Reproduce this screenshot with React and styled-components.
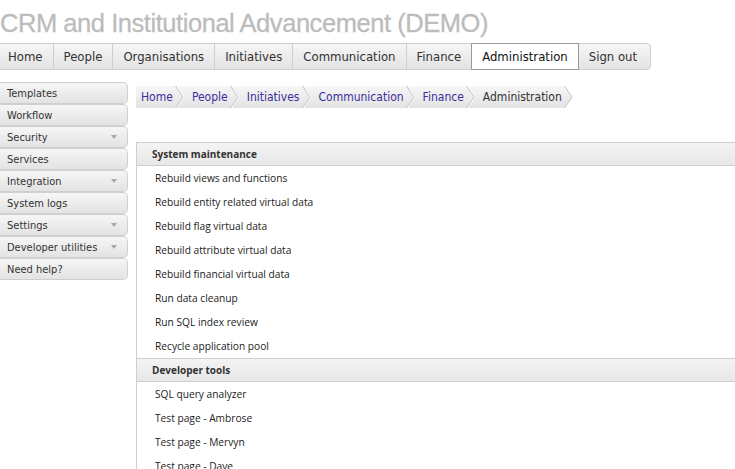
import React, { useId } from "react";
import styled, { createGlobalStyle } from "styled-components";

const GlobalStyle = createGlobalStyle`
  html, body {
    margin: 0;
    padding: 0;
    background: #fff;
  }
  body {
    font-family: "DejaVu Sans Condensed", "DejaVu Sans", Verdana, sans-serif;
    overflow: hidden;
  }
  a {
    text-decoration: none;
  }
`;

const tahoma = `"DejaVu Sans Condensed", "DejaVu Sans", Tahoma, sans-serif`;
const segoe = `"Open Sans", "Noto Sans", "Segoe UI", sans-serif`;
const greyBar = `linear-gradient(#f6f6f6, #e3e3e3)`;

const Page = styled.div`
  width: 735px;
  height: 469px;
  overflow: hidden;
`;

const Title = styled.h1`
  margin: 0;
  height: 43px;
  padding-top: 8px;
  box-sizing: border-box;
  font-family: "Liberation Sans", Arial, sans-serif;
  font-weight: 400;
  font-size: 25.5px;
  line-height: 30px;
  letter-spacing: -0.45px;
  color: #bcbcbc;
  -webkit-text-stroke: 0.3px #bcbcbc;
  white-space: nowrap;
`;

const Nav = styled.nav`
  display: flex;
  height: 27px;
`;

const Tab = styled.a`
  display: flex;
  align-items: center;
  box-sizing: border-box;
  height: 27px;
  padding: 0 ${({ $last }) => ($last ? 13 : 10)}px;
  padding-left: ${({ $first }) => ($first ? 8 : 10)}px;
  font-family: ${tahoma};
  font-size: 13px;
  color: ${({ $active }) => ($active ? "#111" : "#333")};
  background: ${({ $active }) => ($active ? "#fff" : greyBar)};
  border: 1px solid ${({ $active }) => ($active ? "#9a9a9a" : "#cfcfcf")};
  border-left: 1px solid ${({ $active, $first }) => ($active ? "#9a9a9a" : $first ? "transparent" : "#cfcfcf")};
  margin-left: -1px;
  position: relative;
  z-index: ${({ $active }) => ($active ? 1 : 0)};
  border-radius: ${({ $last }) => ($last ? "0 4px 4px 0" : "0")};
  white-space: nowrap;
`;

const Main = styled.div`
  display: flex;
  gap: 8px;
  margin-top: 12px;
  align-items: flex-start;
`;

const Side = styled.ul`
  list-style: none;
  margin: 0;
  padding: 0;
  width: 128px;
  flex: none;
`;

const SideItem = styled.li`
  display: flex;
  align-items: center;
  box-sizing: border-box;
  height: 22px;
  padding: 0 10px 0 7px;
  border: 1px solid #cfcfcf;
  border-left: none;
  border-radius: 0 5px 5px 0;
  background: ${greyBar};
  font-family: ${tahoma};
  font-size: 11px;
  color: #333;
  white-space: nowrap;
`;

const DropArrow = styled.span`
  margin-left: auto;
  width: 0;
  height: 0;
  border-left: 3.5px solid transparent;
  border-right: 3.5px solid transparent;
  border-top: 4px solid #a8a8a8;
`;

const Content = styled.div`
  flex: 1;
  min-width: 0;
  padding-top: 4px;
`;

const Crumbs = styled.div`
  display: flex;
  height: 22px;
`;

const CrumbText = styled.a`
  display: flex;
  align-items: center;
  height: 22px;
  padding: 0 2px 0 ${({ $first }) => ($first ? 5 : 7)}px;
  background: ${greyBar};
  font-family: ${tahoma};
  font-size: 12px;
  color: ${({ $current }) => ($current ? "#333" : "#3b2f9e")};
  white-space: nowrap;
`;

const ChevronSvg = styled.svg`
  display: block;
  flex: none;
`;

function Chevron({ last }) {
  const id = useId().replace(/:/g, "");
  return (
    <ChevronSvg width="10" height="22" viewBox="0 0 10 22">
      <defs>
        <linearGradient id={id} x1="0" y1="0" x2="0" y2="1">
          <stop offset="0" stopColor="#f6f6f6" />
          <stop offset="1" stopColor="#e3e3e3" />
        </linearGradient>
      </defs>
      {!last && <rect x="0" y="0" width="10" height="22" fill={`url(#${id})`} />}
      <polygon points="0,0 8.5,11 0,22" fill={`url(#${id})`} />
      <polyline points="1.5,0 9,11 1.5,22" fill="none" stroke="#fff" strokeWidth="1" />
      <polyline points="0.5,0 8,11 0.5,22" fill="none" stroke="#c4c4c4" strokeWidth="1" />
    </ChevronSvg>
  );
}

const Panel = styled.div`
  margin-top: 34px;
  border-left: 1px solid #cfcfcf;
  min-height: 340px;
`;

const SectionHead = styled.div`
  box-sizing: border-box;
  height: 24px;
  display: flex;
  align-items: center;
  padding-left: 15px;
  border-top: 1px solid #cfcfcf;
  border-bottom: 1px solid #cfcfcf;
  background: linear-gradient(#f4f4f4, #e8e8e8);
  font-family: ${segoe};
  font-weight: 700;
  font-size: 10px;
  color: #333;
`;

const LinkList = styled.ul`
  list-style: none;
  margin: 0;
  padding: 0;
`;

const LinkItem = styled.li`
  height: 24px;
  line-height: 24px;
  padding-left: 18px;
  font-family: ${segoe};
  font-size: 10.2px;
  color: #222;
  white-space: nowrap;
`;

const tabs = ["Home", "People", "Organisations", "Initiatives", "Communication", "Finance", "Administration", "Sign out"];

const sideItems = [
  { label: "Templates" },
  { label: "Workflow" },
  { label: "Security", menu: true },
  { label: "Services" },
  { label: "Integration", menu: true },
  { label: "System logs" },
  { label: "Settings", menu: true },
  { label: "Developer utilities", menu: true },
  { label: "Need help?" },
];

const crumbs = ["Home", "People", "Initiatives", "Communication", "Finance", "Administration"];

const sections = [
  {
    title: "System maintenance",
    links: [
      "Rebuild views and functions",
      "Rebuild entity related virtual data",
      "Rebuild flag virtual data",
      "Rebuild attribute virtual data",
      "Rebuild financial virtual data",
      "Run data cleanup",
      "Run SQL index review",
      "Recycle application pool",
    ],
  },
  {
    title: "Developer tools",
    links: ["SQL query analyzer", "Test page - Ambrose", "Test page - Mervyn", "Test page - Dave"],
  },
];

export default function App() {
  return (
    <Page>
      <GlobalStyle />
      <Title>CRM and Institutional Advancement (DEMO)</Title>
      <Nav>
        {tabs.map((t, i) => (
          <Tab
            key={t}
            href="#"
            $first={i === 0}
            $last={i === tabs.length - 1}
            $active={t === "Administration"}
          >
            {t}
          </Tab>
        ))}
      </Nav>
      <Main>
        <Side>
          {sideItems.map((s) => (
            <SideItem key={s.label}>
              {s.label}
              {s.menu && <DropArrow />}
            </SideItem>
          ))}
        </Side>
        <Content>
          <Crumbs>
            {crumbs.map((c, i) => (
              <React.Fragment key={c}>
                <CrumbText href="#" $first={i === 0} $current={i === crumbs.length - 1}>
                  {c}
                </CrumbText>
                <Chevron last={i === crumbs.length - 1} />
              </React.Fragment>
            ))}
          </Crumbs>
          <Panel>
            {sections.map((s) => (
              <section key={s.title}>
                <SectionHead>{s.title}</SectionHead>
                <LinkList>
                  {s.links.map((l) => (
                    <LinkItem key={l}>{l}</LinkItem>
                  ))}
                </LinkList>
              </section>
            ))}
          </Panel>
        </Content>
      </Main>
    </Page>
  );
}
